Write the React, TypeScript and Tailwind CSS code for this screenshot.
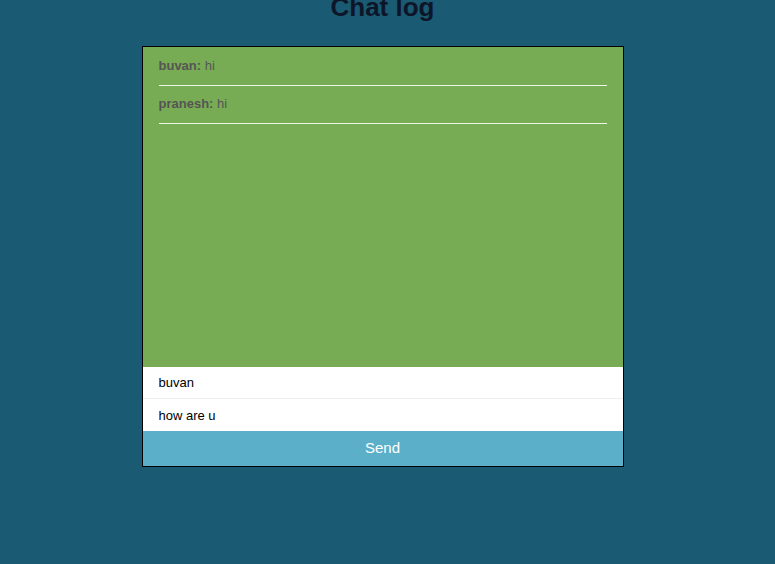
import React, { useState } from 'react';

interface Message {
  user: string;
  text: string;
}

const initialMessages: Message[] = [
  { user: 'buvan', text: 'hi' },
  { user: 'pranesh', text: 'hi' },
];

const App: React.FC = () => {
  const [messages, setMessages] = useState<Message[]>(initialMessages);
  const [name, setName] = useState('buvan');
  const [text, setText] = useState('how are u');

  const send = () => {
    if (!text.trim()) return;
    setMessages([...messages, { user: name, text }]);
    setText('');
  };

  return (
    <div className="min-h-screen overflow-hidden bg-[#1a5a72] font-['Liberation_Sans',Arial,sans-serif]">
      <div className="w-[765px]">
        <h1 className="-mt-[9px] text-center text-[26px] leading-8 font-bold text-[#0d1628]">Chat log</h1>

        <div className="mx-auto mt-[23px] w-[482px] border border-black">
          <div className="h-[320px] overflow-y-auto bg-[#78ac54] px-4 pt-px">
            {messages.map((m, i) => (
              <div key={i} className="border-b border-[#eef4e8] pt-[9px] pb-[10px] text-[13px] leading-[18px] text-[#555555]">
                <span className="font-bold">{m.user}:</span> {m.text}
              </div>
            ))}
          </div>

          <input
            value={name}
            onChange={e => setName(e.target.value)}
            className="block h-[32px] w-full border-b border-[#eeeeee] bg-white px-4 text-[13px] text-black outline-none"
          />
          <input
            value={text}
            autoFocus
            onFocus={e => e.currentTarget.setSelectionRange(text.length, text.length)}
            onChange={e => setText(e.target.value)}
            onKeyDown={e => e.key === 'Enter' && send()}
            className="block h-[32px] w-full bg-white px-4 text-[13px] text-black caret-black outline-none"
          />
          <button
            onClick={send}
            className="block h-[35px] w-full bg-[#5bafc9] text-[15px] text-white"
          >
            Send
          </button>
        </div>
      </div>
    </div>
  );
};

export default App;
